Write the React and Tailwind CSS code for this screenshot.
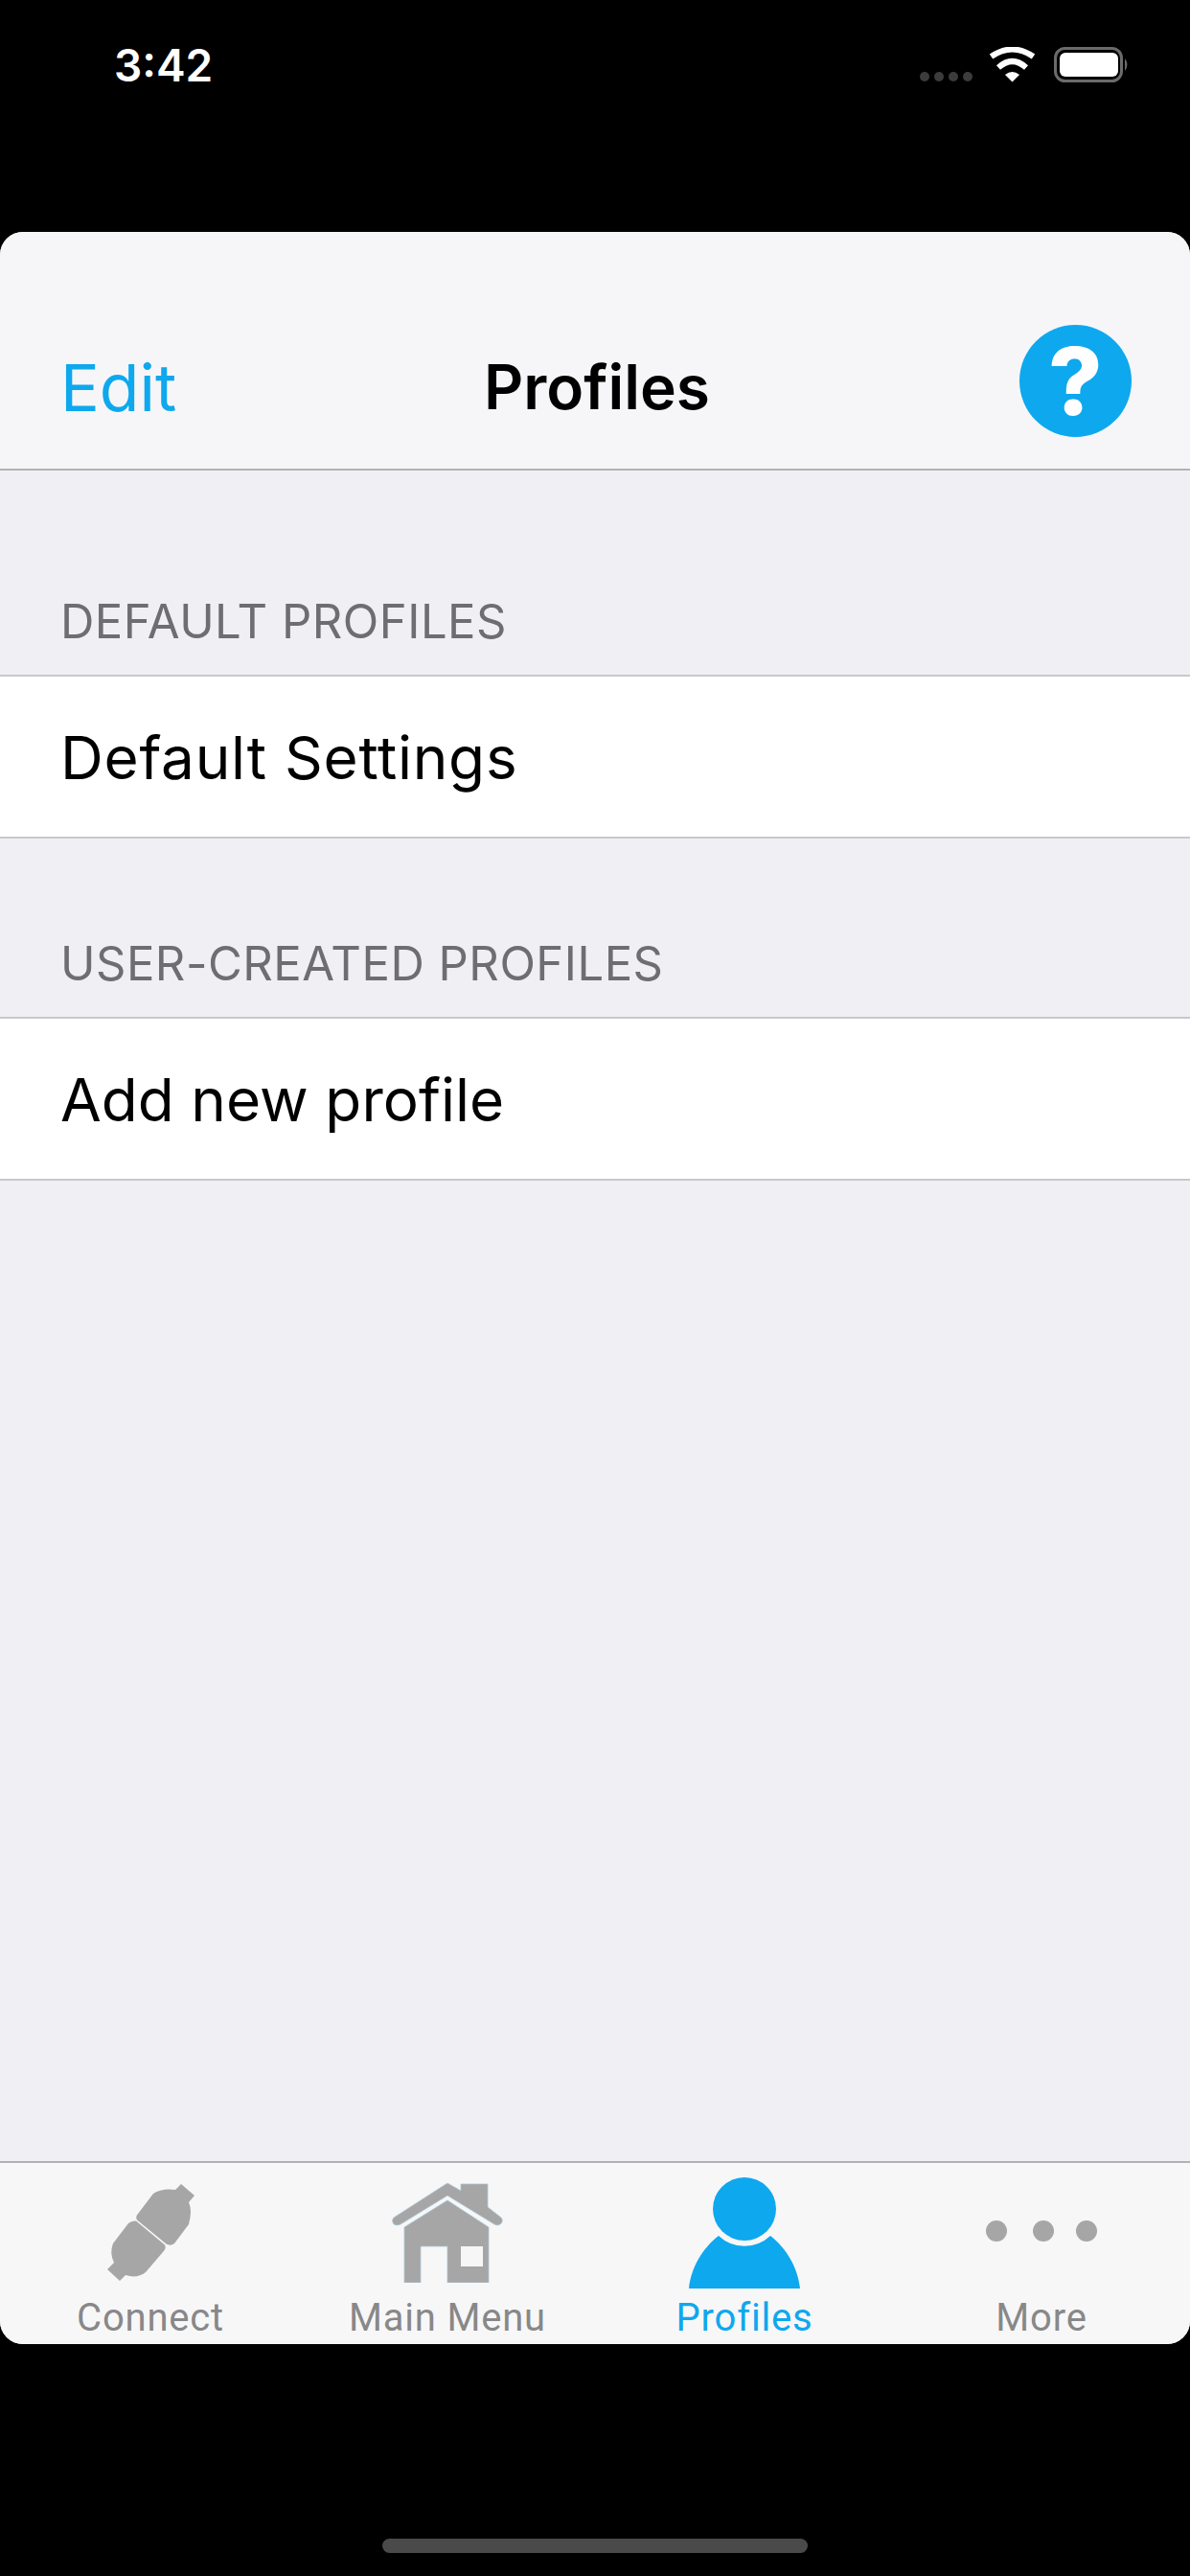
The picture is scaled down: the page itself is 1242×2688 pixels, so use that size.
const sans = "font-['Inter','Liberation_Sans',sans-serif]";

function StatusIcons() {
  return (
    <svg width="219" height="40" viewBox="0 0 219 40" className="block">
      {[5, 20, 35, 50].map((x) => (
        <circle key={x} cx={x} cy="31" r="5" fill="#3c3c3c" />
      ))}
      <g transform="translate(72 0)">
        <path d="M2.5 10 Q24.5 -5 46.5 10" fill="none" stroke="#fff" strokeWidth="6" />
        <path d="M10 21.5 Q24.5 8.500 39 21.500" fill="none" stroke="#fff" strokeWidth="6" />
        <path d="M17 29 Q24.500 23 32 29 L24.500 36.500 Z" fill="#fff" />
      </g>
      <g transform="translate(2 0)">
        <rect x="139.500" y="1.500" width="69" height="34" rx="10" fill="none" stroke="#6b6b6b" strokeWidth="3" />
        <rect x="144" y="6" width="61" height="25" rx="6" fill="#fff" />
        <path d="M212 12 Q217 18 212 25 Z" fill="#6b6b6b" />
      </g>
    </svg>
  );
}

function ConnectIcon() {
  return (
    <svg width="92" height="102" viewBox="0 0 92 102" className="block">
      <path
        d="M78 0 L92 12 L86 19 Q90 28 86 42 L71 62 Q67 65 62.500 62.500 L32 37.500 Q30 34 33 31 L49 10 Q58 4 72 6 Z"
        fill="#a6a6a6"
      />
      <path
        d="M31 38.500 Q26 38 23 41 L7 62 Q3 72 8 82 L1 89 L14 101 L20 95 Q32 99 41 92 L59 71 Q63 67 61 63.500 Z"
        fill="#a6a6a6"
      />
    </svg>
  );
}

function HomeIcon() {
  return (
    <svg width="116" height="104" viewBox="0 0 116 104" className="block">
      <path
        d="M58 0 L72 8 L72 1 L100 1 L100 25 L114 36 Q117 40 113 43 Q110 45 107 43 L58 13 L9 43 Q5 45 2 43 Q-1 39 2 36 Z"
        fill="#a6a6a6"
        stroke="#a9c6d6"
        strokeWidth="0.800"
      />
      <path d="M58 18 L101 46 L101 104 L58 104 L58 66 L30 66 L30 104 L13 104 L13 46 Z" fill="#a6a6a6" stroke="#a9c6d6" strokeWidth="0.800" />
      <rect x="72" y="66" width="23" height="21" fill="#f6f6f7" />
    </svg>
  );
}

function PersonIcon() {
  return (
    <svg width="116" height="116" viewBox="0 0 116 116" className="block">
      <circle cx="58" cy="33" r="33" fill="#0ea8ee" />
      <path d="M0 116 C2 95 14 74 31 61 A39 39 0 0 0 85 61 C102 74 114 95 116 116 Z" fill="#0ea8ee" />
    </svg>
  );
}

function MoreIcon() {
  return (
    <svg width="116" height="116" viewBox="0 0 116 116" className="block">
      <circle cx="11" cy="56" r="11" fill="#a6a6a6" />
      <circle cx="60" cy="56" r="11" fill="#a6a6a6" />
      <circle cx="105" cy="56" r="11" fill="#a6a6a6" />
    </svg>
  );
}

function SectionLabel({ children, className }) {
  return (
    <div className={`text-[49px] leading-[56px] tracking-[0.5px] text-[#6d6d72] pl-[63px] ${className}`}>
      {children}
    </div>
  );
}

function Row({ children, className }) {
  return (
    <div className={`h-[171px] bg-white border-y-2 border-[#c8c8cc] flex items-center pl-[63px] pt-[2px] text-[62px] text-black ${className}`}>
      {children}
    </div>
  );
}

function Tab({ icon, label, active, className }) {
  return (
    <div className={`flex flex-col items-center ${className}`}>
      <div className="h-[116px] flex items-center justify-center">{icon}</div>
      <div
        className={`font-['Roboto',sans-serif] text-[40px] leading-[44px] mt-[9px] tracking-[0.8px] ${active ? 'text-[#0ea8ee]' : 'text-[#888888]'}`}
      >
        {label}
      </div>
    </div>
  );
}

export default function App() {
  return (
    <div className={`w-[1242px] h-[2688px] bg-black flex flex-col ${sans}`}>
      <div className="h-[242px] shrink-0 flex items-start justify-between pl-[119px] pr-[63px] pt-[40px]">
        <div className="text-white text-[46px] leading-[56px] font-semibold">3:42</div>
        <div className="pt-[9px]">
          <StatusIcons />
        </div>
      </div>

      <div className="flex-1 flex flex-col bg-[#efeff4] rounded-[24px] overflow-hidden">
        <div className="h-[249px] shrink-0 bg-[#f6f6f8] border-b-2 border-[#b2b2b6] flex items-end justify-between pl-[63px] pr-[61px] pb-[33px] relative">
          <div className="text-[#0ea8ee] text-[68px] leading-[80px] pb-[12px]">Edit</div>
          <div className="absolute left-[505px] bottom-[45px] text-[64px] leading-[80px] font-semibold text-black">Profiles</div>
          <div className="w-[117px] h-[117px] rounded-full bg-[#0ea8ee] flex items-center justify-center text-white text-[98px] leading-none font-extrabold">
            ?
          </div>
        </div>

        <div className="flex-1 flex flex-col">
          <SectionLabel className="mt-[130px] mb-[27px]">DEFAULT PROFILES</SectionLabel>
          <Row className="tracking-[0.75px]">Default Settings</Row>
          <SectionLabel className="mt-[103px] mb-[27px]">USER-CREATED PROFILES</SectionLabel>
          <Row className="tracking-[0.05px]">Add new profile</Row>
        </div>

        <div className="h-[191px] shrink-0 bg-[#f7f7f8] border-t-2 border-[#b2b2b6] grid grid-cols-4 pt-[15px] pl-[2px]">
          <Tab icon={<ConnectIcon />} label="Connect" />
          <Tab icon={<HomeIcon />} label="Main Menu" />
          <Tab icon={<PersonIcon />} label="Profiles" active />
          <Tab icon={<MoreIcon />} label="More" />
        </div>
      </div>

      <div className="h-[242px] shrink-0 flex flex-col items-center justify-end pb-[24px]">
        <div className="w-[444px] h-[15px] rounded-full bg-[#4a4a4a]" />
      </div>
    </div>
  );
}
